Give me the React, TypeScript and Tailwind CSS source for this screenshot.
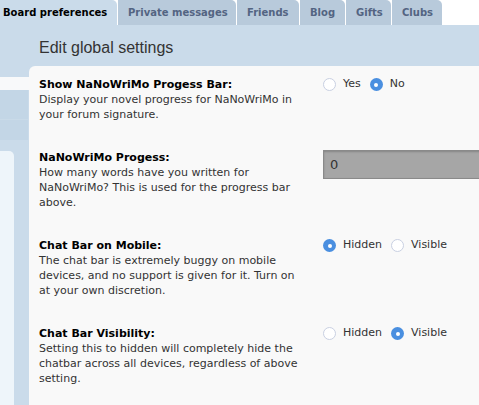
import React from "react";

type Option = { label: string; checked: boolean };

const tabs = [
  { label: "Board preferences", w: "w-[117px]", active: true },
  { label: "Private messages", w: "w-[119px]", active: false },
  { label: "Friends", w: "w-[63px]", active: false },
  { label: "Blog", w: "w-[46px]", active: false },
  { label: "Gifts", w: "w-[46px]", active: false },
  { label: "Clubs", w: "w-[51px]", active: false },
];

function Radio({ checked }: { checked: boolean }) {
  return checked ? (
    <span className="flex h-[13px] w-[13px] items-center justify-center rounded-full bg-[#4a8fe0]">
      <span className="h-[4px] w-[4px] rounded-full bg-white" />
    </span>
  ) : (
    <span className="h-[13px] w-[13px] rounded-full border border-[#c9d0e2] bg-white" />
  );
}

function RadioGroup({ options }: { options: Option[] }) {
  return (
    <div className="flex h-[15px] items-center gap-[9px]">
      {options.map((o) => (
        <label key={o.label} className="flex items-center gap-[7px] text-[11px] text-[#333]">
          <Radio checked={o.checked} />
          <span>{o.label}</span>
        </label>
      ))}
    </div>
  );
}

function Row({
  title,
  desc,
  children,
}: {
  title: string;
  desc: string;
  children: React.ReactNode;
}) {
  return (
    <div className="flex">
      <div className="w-[284px] pr-[22px]">
        <div className="text-[11px] font-bold leading-[15px] text-black">{title}</div>
        <div className="text-[11px] leading-[15px] text-[#333]">{desc}</div>
      </div>
      <div className="flex-1">{children}</div>
    </div>
  );
}

export default function App() {
  return (
    <div
      className="h-[405px] w-[479px] overflow-hidden bg-white"
      style={{ fontFamily: '"DejaVu Sans", Verdana, sans-serif' }}
    >
      {/* tabs */}
      <div className="flex h-[25px]">
        {tabs.map((t) => (
          <div
            key={t.label}
            className={
              t.active
                ? `${t.w} flex items-center rounded-tr-[5px] bg-[#cadbea] pl-[3px] text-[10px] font-bold text-black`
                : `${t.w} flex items-center rounded-tr-[5px] border-l border-white bg-[#b8cadb] pl-[10px] text-[10px] font-bold text-[#536482]`
            }
          >
            {t.label}
          </div>
        ))}
      </div>

      {/* header band */}
      <div className="flex h-[41px] items-center bg-[#cadbea] pl-[39px] pt-[4px]">
        <h1
          className="text-[16px] text-[#333]"
          style={{ fontFamily: '"Liberation Sans", Arial, sans-serif' }}
        >
          Edit global settings
        </h1>
      </div>

      {/* body */}
      <div className="flex h-[339px] bg-[#cadbea]">
        <div className="flex w-[29px] flex-col">
          <div className="mt-[11px] h-[15px] w-[29px] bg-[#f8f9fa]" />
          <div className="h-[35px] w-[28px] border-b border-[#c9dae8] bg-[#c3d6e6]" />
          <div className="h-[24px] w-[28px] bg-[#c3d6e6]" />
          <div className="mt-[11px] h-[300px] w-[14px] rounded-tr-[5px] bg-[#eef5fa]" />
        </div>

        <div className="flex flex-1 flex-col gap-[28px] rounded-tl-[6px] bg-[#f9f9f9] pl-[10px] pt-[11px]">
          <Row
            title="Show NaNoWriMo Progess Bar:"
            desc="Display your novel progress for NaNoWriMo in your forum signature."
          >
            <RadioGroup
              options={[
                { label: "Yes", checked: false },
                { label: "No", checked: true },
              ]}
            />
          </Row>

          <Row
            title="NaNoWriMo Progess:"
            desc="How many words have you written for NaNoWriMo? This is used for the progress bar above."
          >
            <div className="flex h-[29px] w-[200px] items-center border border-[#8a8a8a] bg-[#a6a6a6] pl-[6px] text-[13px] text-[#333] shadow-[inset_0_1px_2px_rgba(0,0,0,0.2)]">
              0
            </div>
          </Row>

          <Row
            title="Chat Bar on Mobile:"
            desc="The chat bar is extremely buggy on mobile devices, and no support is given for it. Turn on at your own discretion."
          >
            <RadioGroup
              options={[
                { label: "Hidden", checked: true },
                { label: "Visible", checked: false },
              ]}
            />
          </Row>

          <Row
            title="Chat Bar Visibility:"
            desc="Setting this to hidden will completely hide the chatbar across all devices, regardless of above setting."
          >
            <RadioGroup
              options={[
                { label: "Hidden", checked: false },
                { label: "Visible", checked: true },
              ]}
            />
          </Row>
        </div>
      </div>
    </div>
  );
}
